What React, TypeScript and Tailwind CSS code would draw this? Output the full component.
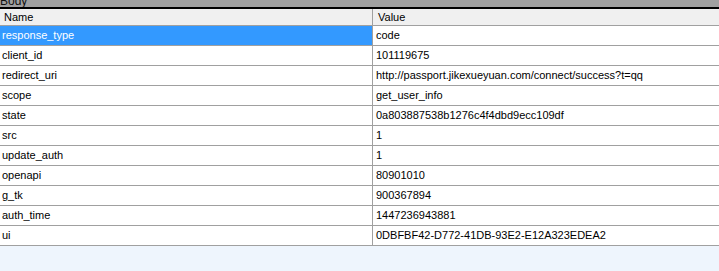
import React from 'react';

const rows: [string, string][] = [
  ['response_type', 'code'],
  ['client_id', '101119675'],
  ['redirect_uri', 'http://passport.jikexueyuan.com/connect/success?t=qq'],
  ['scope', 'get_user_info'],
  ['state', '0a803887538b1276c4f4dbd9ecc109df'],
  ['src', '1'],
  ['update_auth', '1'],
  ['openapi', '80901010'],
  ['g_tk', '900367894'],
  ['auth_time', '1447236943881'],
  ['ui', '0DBFBF42-D772-41DB-93E2-E12A323EDEA2'],
];

const App: React.FC = () => {
  return (
    <div className="w-[719px] h-[271px] overflow-hidden bg-[#eef5fd] text-[11px] text-black font-['Liberation_Sans',Arial,sans-serif]">
      <div className="h-[7px] bg-[#a0a0a0] overflow-hidden leading-none">
        <span className="block -mt-[5px] pl-0 text-[12px] text-[#111]">Body</span>
      </div>
      <div className="h-[2px] bg-black" />
      <div className="grid grid-cols-[373px_1fr] h-[17px] bg-[#f0f0f0] border-b border-[#a0a0a0] items-center">
        <div className="pl-[4px] border-r border-[#a0a0a0] h-full flex items-center">Name</div>
        <div className="pl-[5px] h-full flex items-center">Value</div>
      </div>
      {rows.map(([name, value], i) => (
        <div key={name} className="grid grid-cols-[373px_1fr] h-[20px] bg-white border-b border-[#a0a0a0]">
          <div className={`pl-[2px] border-r border-[#a0a0a0] flex items-center ${i === 0 ? 'bg-[#3399ff] text-white' : ''}`}>
            {name}
          </div>
          <div className="pl-[3px] flex items-center">{value}</div>
        </div>
      ))}
    </div>
  );
};

export default App;
